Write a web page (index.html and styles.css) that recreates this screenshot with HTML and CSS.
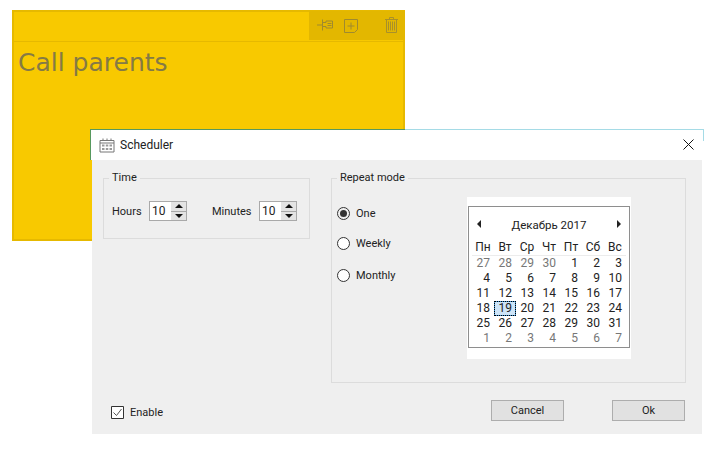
FILE: index.html
```html
<!DOCTYPE html>
<html lang="en">
<head>
<meta charset="UTF-8">
<meta name="viewport" content="width=device-width, initial-scale=1.0">
<title>Scheduler</title>
<link rel="stylesheet" href="styles.css">
</head>
<body>
<div class="note">
  <div class="note-head">
    <div class="note-tools">
      <svg class="tool pin" width="16" height="12" viewBox="0 0 16 12">
        <path d="M0 6h5M5.500 .5v11M6 3.500h3v-1.500h6.500v7h-6.500v-1.500h-3M10.500 4.500h4M10.500 6.500h4" />
      </svg>
      <svg class="tool add" width="14" height="14" viewBox="0 0 14 14">
        <path d="M.5 .5h13v10l-3 3h-10zM7 3.500v7M3.500 7h7" />
      </svg>
      <svg class="tool trash" width="13" height="16" viewBox="0 0 13 16">
        <path d="M0 2.500h13M4.500 2v-1.500h4v1.500M1.500 2.500v13h10v-13M3.500 4.500v9M5.500 4.500v9M7.500 4.500v9M9.500 4.500v9" />
      </svg>
    </div>
  </div>
  <div class="note-text">Call parents</div>
</div>

<div class="dialog">
  <div class="titlebar">
    <svg class="title-icon" width="16" height="16" viewBox="0 0 16 16">
      <path class="cal-line" d="M1 3.500h14v11.500h-14zM1 6h14M4 1.500v2M8 1.500v2M12 1.500v2" />
      <path class="cal-dots" d="M3 7.500h2.500v2h-2.500zM6.800 7.500h2.500v2h-2.500zM10.500 7.500h2.500v2h-2.500zM3 11h2.500v2h-2.500zM6.800 11h2.500v2h-2.500zM10.500 11h2.500v2h-2.500z" />
    </svg>
    <span class="title-text">Scheduler</span>
    <svg class="close" width="11" height="11" viewBox="0 0 11 11">
      <path d="M.5 .5l10 10M10.500 .5l-10 10" />
    </svg>
  </div>
  <div class="dialog-body">
    <div class="groups">
      <fieldset class="group time-group">
        <legend>Time</legend>
        <div class="time-row">
          <span class="lbl">Hours</span>
          <div class="spin"><span class="spin-val">10</span><div class="spin-btns"><i class="up"></i><i class="down"></i></div></div>
          <span class="lbl minutes">Minutes</span>
          <div class="spin"><span class="spin-val">10</span><div class="spin-btns"><i class="up"></i><i class="down"></i></div></div>
        </div>
      </fieldset>
      <fieldset class="group repeat-group">
        <legend>Repeat mode</legend>
        <div class="repeat-row">
          <div class="radios">
            <div class="radio checked"><span class="dot"></span>One</div>
            <div class="radio"><span class="dot"></span>Weekly</div>
            <div class="radio"><span class="dot"></span>Monthly</div>
          </div>
          <div class="cal-wrap">
            <div class="cal">
              <div class="cal-head">
                <i class="arrow-l"></i>
                <span>Декабрь 2017</span>
                <i class="arrow-r"></i>
              </div>
              <div class="cal-grid week">
                <span>Пн</span><span>Вт</span><span>Ср</span><span>Чт</span><span>Пт</span><span>Сб</span><span>Вс</span>
              </div>
              <div class="cal-grid days">
                <span class="off">27</span><span class="off">28</span><span class="off">29</span><span class="off">30</span><span>1</span><span>2</span><span>3</span>
                <span>4</span><span>5</span><span>6</span><span>7</span><span>8</span><span>9</span><span>10</span>
                <span>11</span><span>12</span><span>13</span><span>14</span><span>15</span><span>16</span><span>17</span>
                <span>18</span><span class="today">19</span><span>20</span><span>21</span><span>22</span><span>23</span><span>24</span>
                <span>25</span><span>26</span><span>27</span><span>28</span><span>29</span><span>30</span><span>31</span>
                <span class="off">1</span><span class="off">2</span><span class="off">3</span><span class="off">4</span><span class="off">5</span><span class="off">6</span><span class="off">7</span>
              </div>
            </div>
          </div>
        </div>
      </fieldset>
    </div>
    <div class="footer">
      <div class="enable">
        <svg class="check" width="13" height="13" viewBox="0 0 13 13">
          <path class="check-box" d="M.5 .5h12v12h-12z" />
          <path class="check-mark" d="M2.500 6.500l3 3 5-6.500" />
        </svg>
        Enable
      </div>
      <div class="btn cancel">Cancel</div>
      <div class="btn">Ok</div>
    </div>
  </div>
</div>
</body>
</html>
```

FILE: styles.css
```css
body {
  margin: 0;
  background: #fff;
  font-family: Roboto, "Noto Sans", sans-serif;
  font-size: 11px;
  color: #222;
  overflow: hidden;
}

/* the two windows sit on a free canvas */
.note {
  position: absolute;
  left: 12px;
  top: 10px;
  width: 393px;
  height: 231px;
  box-sizing: border-box;
  background: #f8c900;
  border: 2px solid #e6b900;
}
.note-head {
  height: 29px;
  display: flex;
  justify-content: flex-end;
  margin-right: -2px;
  border-bottom: 1px solid #e6b900;
}
.note-tools {
  width: 96px;
  height: 29px;
  margin-top: -1px;
  background: #e3b700;
  display: flex;
  align-items: center;
  padding-left: 8px;
  box-sizing: border-box;
}
.tool {
  fill: none;
  stroke: #9f8a2f;
  stroke-width: 1;
}
.pin {
  margin-top: -2px;
}
.add {
  margin-left: 11px;
}
.trash {
  margin-left: 27px;
  margin-top: -2px;
  stroke: #a8902a;
}
.note-text {
  padding: 3px 0 0 4px;
  font-family: "Comic Sans MS", "DejaVu Sans", sans-serif;
  font-size: 25px;
  line-height: 36px;
  color: #857a45;
}

.dialog {
  position: absolute;
  left: 90px;
  top: 129px;
  width: 614px;
  height: 305px;
}
.dialog::before {
  content: "";
  position: absolute;
  left: 0;
  top: 0;
  width: 315px;
  height: 1px;
  background: #57985f;
}
.dialog::after {
  content: "";
  position: absolute;
  left: 315px;
  right: 0;
  top: 0;
  height: 1px;
  background: #a5dbe6;
}
.titlebar {
  height: 31px;
  background: linear-gradient(#a5dbe6, #a5dbe6) right top / 1px 12px no-repeat #fff;
  display: flex;
  align-items: center;
  padding-left: 8px;
  box-sizing: border-box;
  border-left: 1px solid #57985f;
}
.title-icon {
  margin-right: 5px;
}
.cal-line {
  fill: none;
  stroke: #777;
}
.cal-dots {
  fill: #999;
}
.title-text {
  font-size: 12px;
  flex: 1;
}
.close {
  fill: none;
  stroke: #111;
  margin-right: 10px;
}
.dialog-body {
  height: 274px;
  margin: 0 2px;
  background: #efefef;
  box-sizing: border-box;
  padding: 10px 16px 0 11px;
}
.groups {
  display: flex;
  align-items: flex-start;
  gap: 21px;
}
.group {
  margin: 0;
  padding: 0;
  border: 1px solid #dcdcdc;
  box-sizing: border-box;
  min-width: 0;
}
.group legend {
  margin-left: 5px;
  padding: 0 3px;
  line-height: 16px;
}
.time-group {
  width: 207px;
  height: 69px;
}
.repeat-group {
  width: 355px;
  height: 213px;
}
.time-row {
  display: flex;
  align-items: center;
  padding: 15px 0 0 8px;
}
.lbl {
  width: 37px;
}
.minutes {
  width: 47px;
  margin-left: 25px;
}
.spin {
  width: 38px;
  height: 20px;
  box-sizing: border-box;
  border: 1px solid #a9a9a9;
  background: #fff;
  display: flex;
  align-items: center;
  justify-content: space-between;
  font-size: 12px;
}
.spin-val {
  padding-left: 2px;
}
.spin-btns {
  width: 15px;
  height: 18px;
  display: flex;
  flex-direction: column;
  gap: 1px;
  background: #a9a9a9;
}
.spin-btns i {
  flex: 1;
  background: #e4e4e4;
  display: flex;
  align-items: center;
  justify-content: center;
}
.up::before, .down::before {
  content: "";
  border-left: 4px solid transparent;
  border-right: 4px solid transparent;
}
.up::before {
  border-bottom: 4px solid #111;
}
.down::before {
  border-top: 4px solid #111;
}
.repeat-row {
  display: flex;
  align-items: flex-start;
  padding: 11px 0 0 5px;
}
.radios {
  width: 130px;
  padding-top: 9px;
}
.radio {
  display: flex;
  align-items: center;
  gap: 6px;
  height: 14px;
  margin-bottom: 16px;
}
.radio + .radio + .radio {
  margin-top: 18px;
}
.dot {
  width: 13px;
  height: 13px;
  box-sizing: border-box;
  border: 1px solid #333;
  border-radius: 50%;
  background: #fff;
  display: flex;
  align-items: center;
  justify-content: center;
}
.checked .dot {
  background: #efefef;
}
.checked .dot::before {
  content: "";
  width: 7px;
  height: 7px;
  border-radius: 50%;
  background: #333;
}
.cal-wrap {
  width: 164px;
  height: 162px;
  box-sizing: border-box;
  background: #fff;
  padding: 9px 1px 0 1px;
}
.cal {
  height: 142px;
  box-sizing: border-box;
  border: 1px solid #8e8e8e;
  padding: 0 3px;
  font-size: 12px;
}
.cal-head {
  height: 33px;
  display: flex;
  align-items: center;
  justify-content: space-between;
  padding: 0 5px;
}
.cal-head span {
  font-size: 11.500px;
  padding-top: 2px;
}
.arrow-l, .arrow-r {
  border-top: 4px solid transparent;
  border-bottom: 4px solid transparent;
}
.arrow-l {
  border-right: 4px solid #222;
}
.arrow-r {
  border-left: 4px solid #222;
}
.cal-grid {
  display: grid;
  grid-template-columns: repeat(7, 22px);
  grid-auto-rows: 15px;
  line-height: 15px;
}
.week {
  text-align: center;
  border-bottom: 1px solid #ececec;
}
.days span {
  box-sizing: border-box;
  text-align: right;
  padding-right: 4px;
}
.days .off {
  color: #777;
}
.days .today {
  background: #cde4f7;
  outline: 1px dotted #000;
  outline-offset: -1px;
  box-shadow: inset 0 0 0 1px #3a8fd0;
}
.footer {
  display: flex;
  align-items: center;
  margin-top: 17px;
  height: 21px;
}
.enable {
  display: flex;
  align-items: center;
  gap: 6px;
  margin: 4px 0 0 8px;
  width: 380px;
}
.check-box {
  fill: #fff;
  stroke: #333;
}
.check-mark {
  fill: none;
  stroke: #555;
}
.btn {
  width: 73px;
  height: 21px;
  box-sizing: border-box;
  background: #e1e1e1;
  border: 1px solid #adadad;
  text-align: center;
  line-height: 20px;
}
.cancel {
  margin-right: 48px;
}
```
